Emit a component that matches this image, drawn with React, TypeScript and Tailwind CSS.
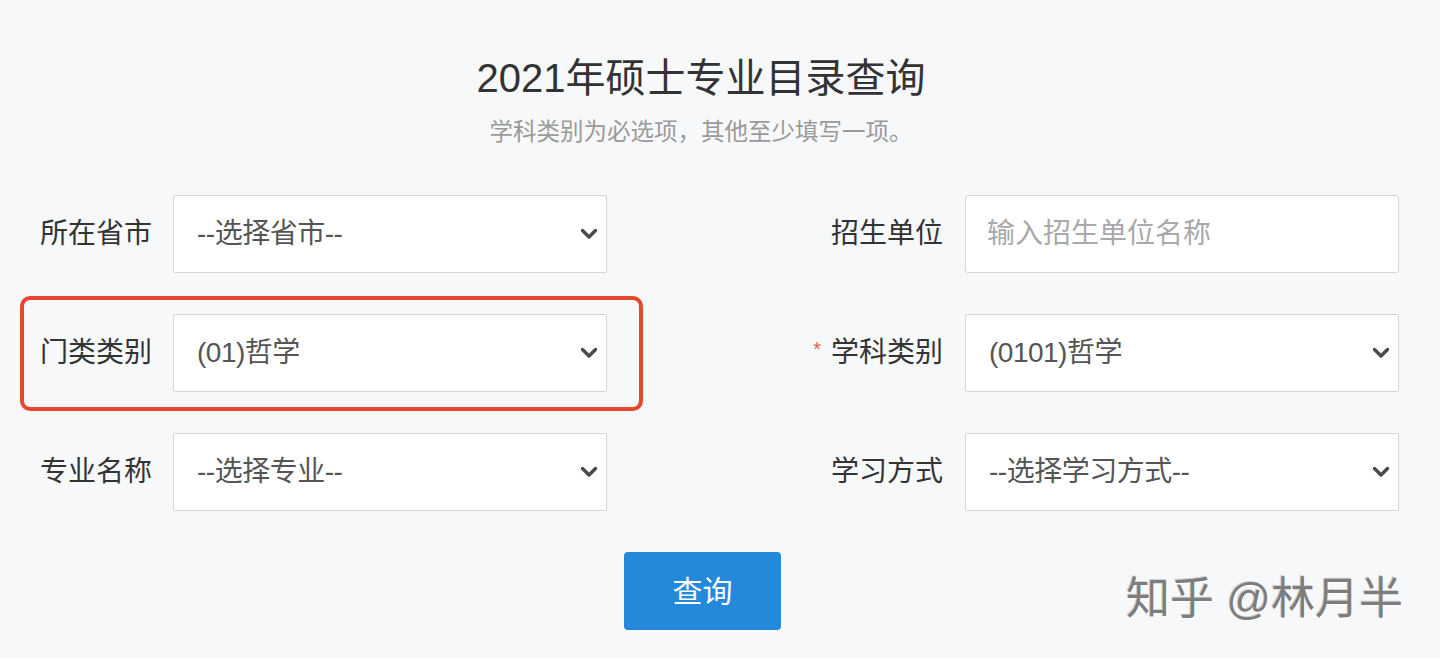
import React from 'react';

const FONT = "font-['Liberation_Sans','Noto_Sans_CJK_SC',sans-serif]";

function Chevron() {
  return (
    <svg
      className="pointer-events-none absolute right-[9px] top-1/2 h-[12px] w-[18px] -translate-y-1/2"
      viewBox="0 0 18 12"
      fill="none"
      stroke="#4a4a4a"
      strokeWidth={3.4}
      strokeLinecap="round"
      strokeLinejoin="round"
    >
      <polyline points="2.5,2.5 9,9 15.5,2.5" />
    </svg>
  );
}

function SelectBox({ value }: { value: string }) {
  return (
    <div className="relative h-[78px] w-[434px]">
      <select
        defaultValue={value}
        className="h-full w-full appearance-none rounded-[2px] border border-[#d4d4d4] bg-white pl-[23px] text-[28px] tracking-[-0.5px] text-[#555] outline-none"
      >
        <option>{value}</option>
      </select>
      <Chevron />
    </div>
  );
}

function InputBox({ placeholder }: { placeholder: string }) {
  return (
    <input
      placeholder={placeholder}
      className="h-[78px] w-[434px] rounded-[3px] border border-[#d4d4d4] bg-white pl-[21px] text-[28px] text-[#555] outline-none placeholder:text-[#a9a9a9]"
    />
  );
}

function LeftField({ label, children }: { label: string; children: React.ReactNode }) {
  return (
    <div className="flex items-center">
      <span className="w-[133px] text-[28px] text-[#333]">{label}</span>
      {children}
    </div>
  );
}

function RightField({
  label,
  required,
  children,
}: {
  label: string;
  required?: boolean;
  children: React.ReactNode;
}) {
  return (
    <div className="flex items-center">
      {required && <span className="mr-[10px] -mt-[8px] text-[20px] text-[#e0604f]">*</span>}
      <span className="mr-[22px] text-[28px] text-[#333]">{label}</span>
      {children}
    </div>
  );
}

export default function App() {
  return (
    <div className={`h-[658px] w-full overflow-hidden bg-[#f7f8fa] ${FONT}`}>
      {/* Header */}
      <div className="pr-[38px] pt-[54px] text-center">
        <h1 className="text-[40px] leading-[48px] text-[#333]">2021年硕士专业目录查询</h1>
        <p className="mt-[16px] text-[23.5px] leading-[28px] text-[#9a9a9a]">学科类别为必选项，其他至少填写一项。</p>
      </div>

      {/* Form rows */}
      <div className="mt-[49px] flex flex-col gap-[41px] pl-[40px] pr-[41px]">
        <div className="flex items-center justify-between">
          <LeftField label="所在省市">
            <SelectBox value="--选择省市--" />
          </LeftField>
          <RightField label="招生单位">
            <InputBox placeholder="输入招生单位名称" />
          </RightField>
        </div>

        <div className="flex items-center justify-between">
          <div className="relative">
            <LeftField label="门类类别">
              <SelectBox value="(01)哲学" />
            </LeftField>
            <div className="pointer-events-none absolute -bottom-[19px] -left-[20px] -right-[36px] -top-[18px] rounded-[10px] border-[4px] border-[#e8472f]" />
          </div>
          <RightField label="学科类别" required>
            <SelectBox value="(0101)哲学" />
          </RightField>
        </div>

        <div className="flex items-center justify-between">
          <LeftField label="专业名称">
            <SelectBox value="--选择专业--" />
          </LeftField>
          <RightField label="学习方式">
            <SelectBox value="--选择学习方式--" />
          </RightField>
        </div>
      </div>

      {/* Submit + watermark */}
      <div className="relative mt-[41px] flex justify-center pr-[35px]">
        <button className="h-[78px] w-[157px] rounded-[4px] bg-[#2488db] text-[30px] text-white">查询</button>
        <span className="pointer-events-none absolute right-[37px] top-[21px] text-[44px] leading-[52px] text-[#7d7d7d] [text-shadow:1px_1px_0_#ffffff,-1px_-1px_0_#d0d0d0]">
          知乎 @林月半
        </span>
      </div>
    </div>
  );
}
